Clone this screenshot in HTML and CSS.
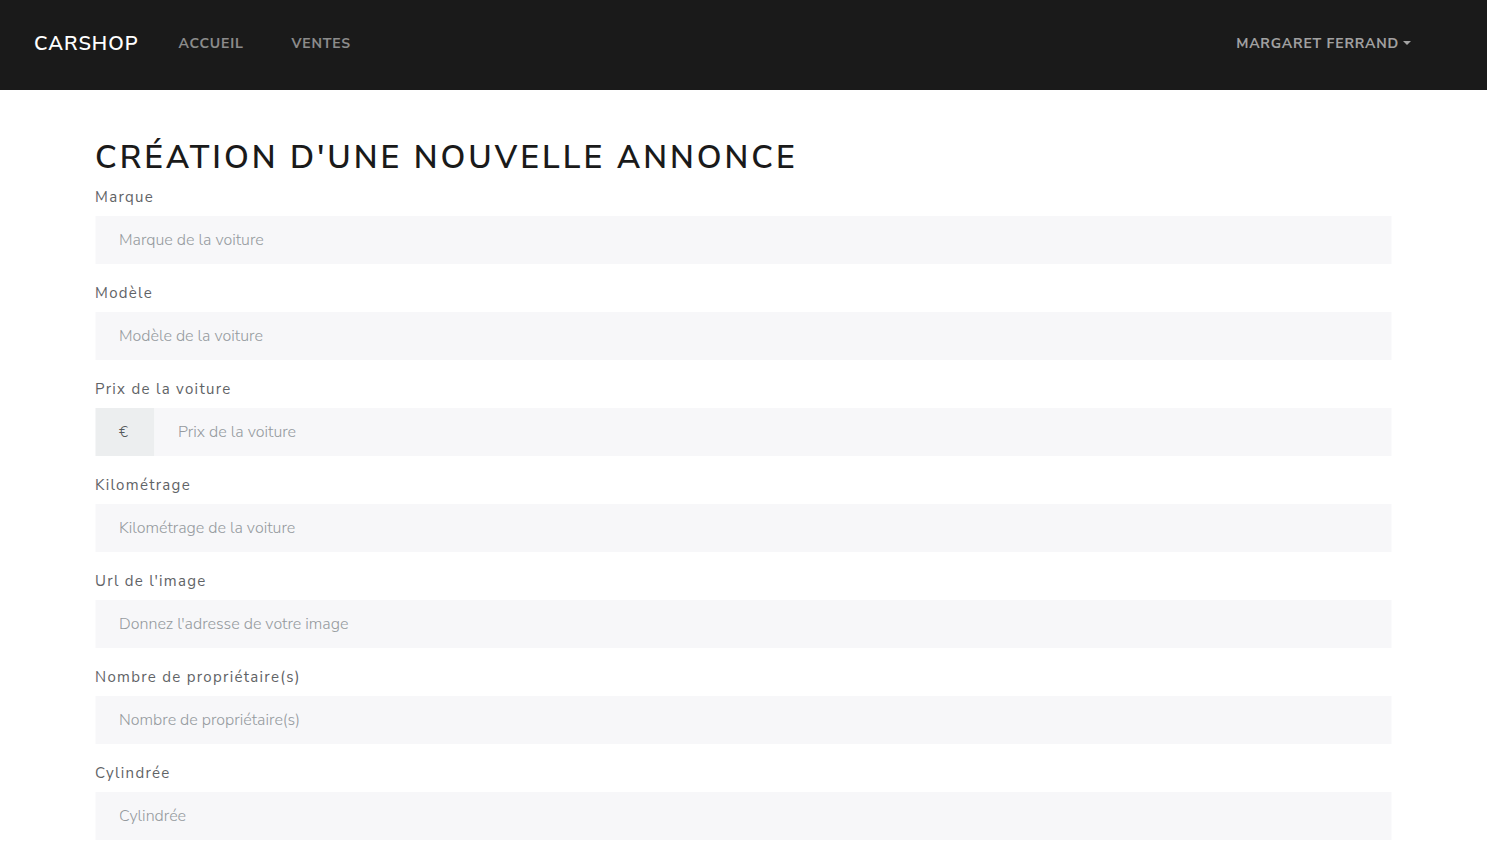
FILE: index.html
```html
<!DOCTYPE html>
<html lang="fr">
<head>
<meta charset="utf-8">
<title>Carshop</title>
<link rel="stylesheet" href="styles.css">
</head>
<body>
<nav class="navbar">
  <a class="brand" href="#">Carshop</a>
  <ul class="nav-main">
    <li><a class="nav-link" href="#">Accueil</a></li>
    <li><a class="nav-link" href="#">Ventes</a></li>
  </ul>
  <div class="nav-user">
    <a class="nav-link dropdown" href="#">Margaret Ferrand<span class="caret"></span></a>
  </div>
</nav>
<main class="container">
  <h1 class="title">Création d'une nouvelle annonce</h1>
  <form class="form">
    <div class="group">
      <label class="label" for="marque">Marque</label>
      <input class="input" id="marque" type="text" placeholder="Marque de la voiture">
    </div>
    <div class="group">
      <label class="label" for="modele">Modèle</label>
      <input class="input" id="modele" type="text" placeholder="Modèle de la voiture">
    </div>
    <div class="group">
      <label class="label" for="prix">Prix de la voiture</label>
      <div class="input-group">
        <span class="addon">€</span>
        <input class="input" id="prix" type="text" placeholder="Prix de la voiture">
      </div>
    </div>
    <div class="group">
      <label class="label" for="km">Kilométrage</label>
      <input class="input" id="km" type="text" placeholder="Kilométrage de la voiture">
    </div>
    <div class="group">
      <label class="label" for="url">Url de l'image</label>
      <input class="input" id="url" type="text" placeholder="Donnez l'adresse de votre image">
    </div>
    <div class="group">
      <label class="label" for="prop">Nombre de propriétaire(s)</label>
      <input class="input" id="prop" type="text" placeholder="Nombre de propriétaire(s)">
    </div>
    <div class="group">
      <label class="label" for="cyl">Cylindrée</label>
      <input class="input" id="cyl" type="text" placeholder="Cylindrée">
    </div>
  </form>
</main>
</body>
</html>
```
FILE: styles.css
```css
* { box-sizing: border-box; }
html, body { margin: 0; padding: 0; }
body {
  font-family: "Nunito Sans", Lato, "Open Sans", sans-serif;
  font-size: 14px;
  line-height: 1.5;
  color: #55595c;
  background: #fff;
}
.navbar {
  display: flex;
  align-items: center;
  height: 90px;
  background: #1a1a1a;
  padding: 0 52px 3px 34px;
}
.brand {
  color: #fff;
  font-size: 20px;
  font-weight: 600;
  letter-spacing: 1px;
  text-transform: uppercase;
  text-decoration: none;
  margin-right: 16px;
}
.nav-main {
  display: flex;
  list-style: none;
  margin: 0;
  padding: 0;
  flex: 1;
}
.nav-link {
  display: block;
  padding: 8px 24px;
  color: rgba(255,255,255,0.5);
  font-size: 14px;
  font-weight: 700;
  letter-spacing: 0.8px;
  text-transform: uppercase;
  text-decoration: none;
}
.nav-user .nav-link { color: rgba(255,255,255,0.6); }
.caret {
  display: inline-block;
  width: 0;
  height: 0;
  margin-left: 4px;
  vertical-align: 3px;
  border-top: 4px solid currentColor;
  border-left: 4px solid transparent;
  border-right: 4px solid transparent;
}
.container {
  width: 1320px;
  margin: 0 auto;
  padding: 0 12px;
  transform: translateX(-0.5px);
}
.title {
  margin: 49px 0 10px;
  font-size: 32px;
  line-height: 1.2;
  font-weight: 600;
  letter-spacing: 3px;
  text-transform: uppercase;
  color: #1a1a1a;
}
.group { margin-bottom: 19px; }
.label {
  display: block;
  margin-bottom: 8px;
  font-size: 15px;
  line-height: 21px;
  letter-spacing: 1.3px;
  color: #5f6366;
}
.input {
  display: block;
  width: 100%;
  height: 48px;
  padding: 0 24px;
  border: 0;
  background: #f7f7f9;
  font-family: inherit;
  font-size: 16px;
  font-weight: 300;
  color: #55595c;
  outline: none;
}
.input::placeholder { color: #959a9e; opacity: 1; }
.input-group { display: flex; }
.input-group .input { flex: 1; }
.addon {
  display: flex;
  align-items: center;
  width: 59px;
  padding: 0 24px;
  background: #eceeef;
  font-size: 15px;
  font-weight: 300;
  color: #55595c;
}
```
